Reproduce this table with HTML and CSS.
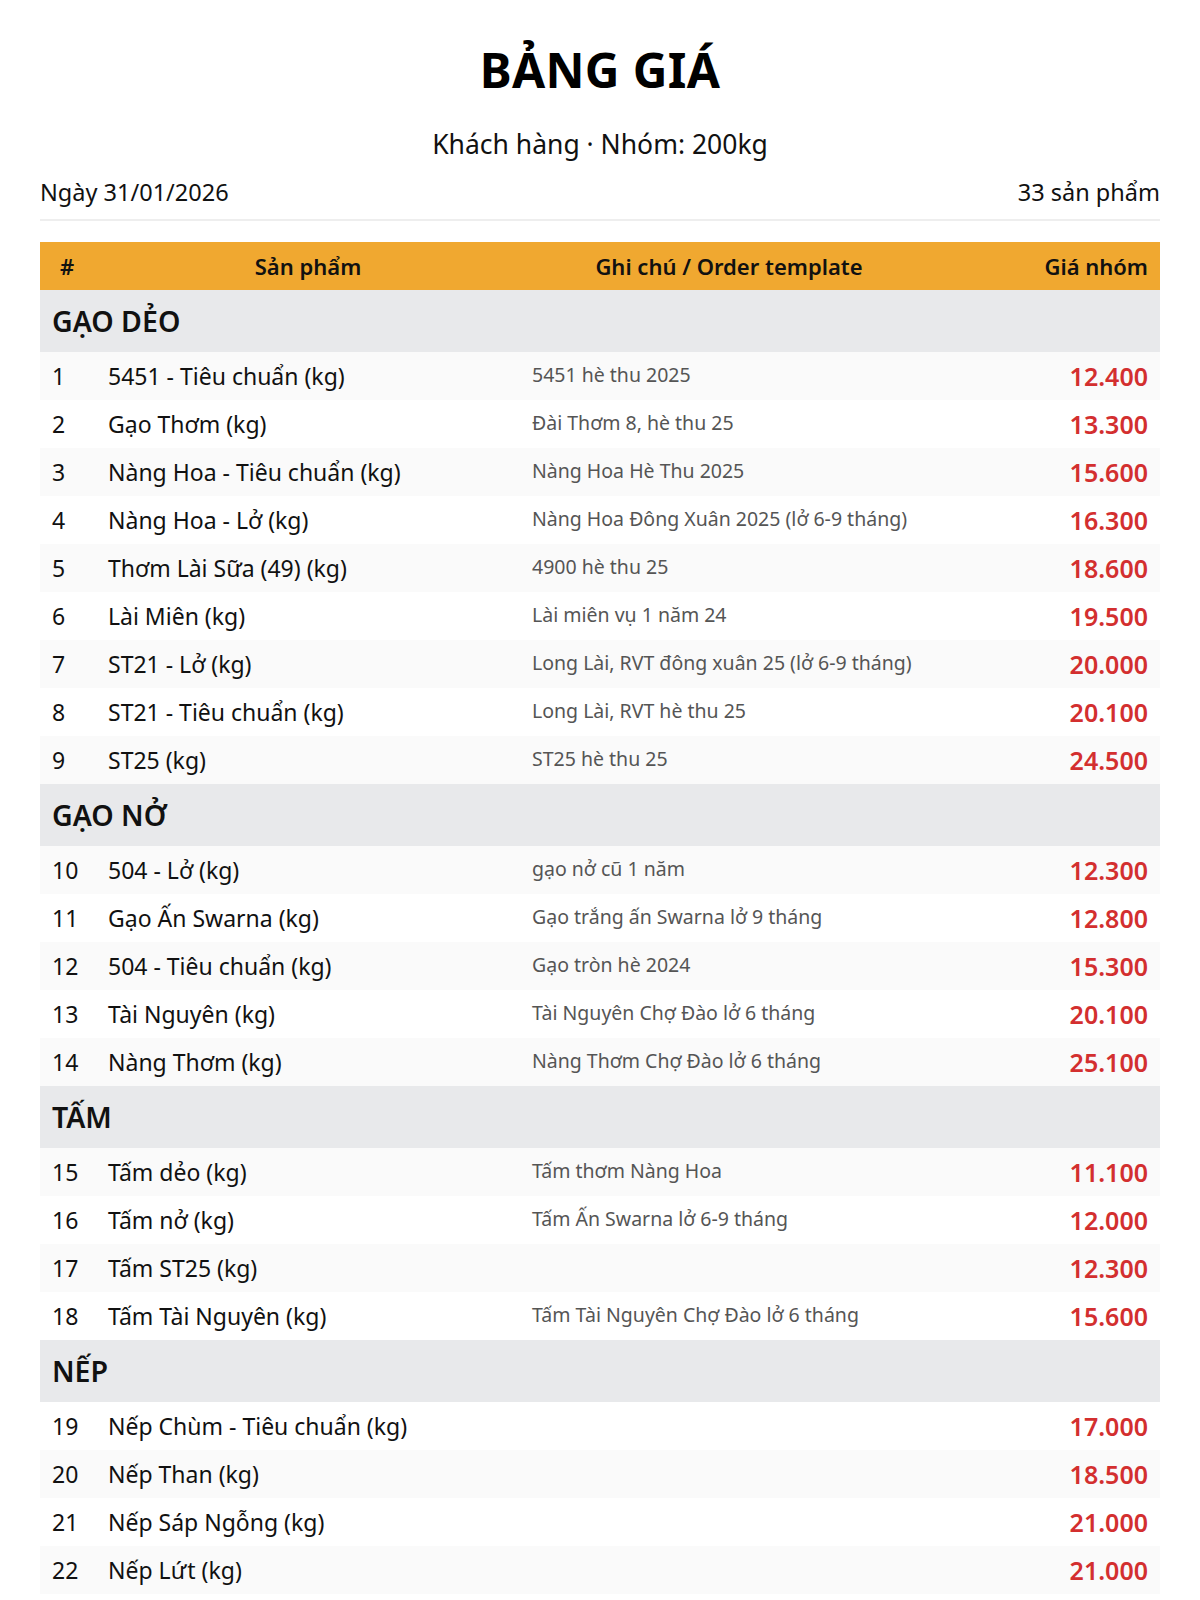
FILE: index.html
```html
<!DOCTYPE html>
<html lang="vi">
<head>
<meta charset="utf-8">
<title>Bảng giá</title>
<link rel="stylesheet" href="styles.css">
</head>
<body>
<div class="page">
  <h1 class="title">BẢNG GIÁ</h1>
  <div class="subtitle">Khách hàng · Nhóm: 200kg</div>
  <div class="meta">
    <span>Ngày 31/01/2026</span>
    <span>33 sản phẩm</span>
  </div>
  <table class="prices">
    <colgroup>
      <col class="c-num"><col class="c-name"><col class="c-note"><col class="c-price">
    </colgroup>
    <thead>
      <tr><th class="num">#</th><th>Sản phẩm</th><th>Ghi chú / Order template</th><th class="price">Giá nhóm</th></tr>
    </thead>
    <tbody>
      <tr class="cat"><td colspan="4">GẠO DẺO</td></tr>
      <tr><td class="num">1</td><td class="name">5451 - Tiêu chuẩn (kg)</td><td class="note">5451 hè thu 2025</td><td class="price">12.400</td></tr>
      <tr><td class="num">2</td><td class="name">Gạo Thơm (kg)</td><td class="note">Đài Thơm 8, hè thu 25</td><td class="price">13.300</td></tr>
      <tr><td class="num">3</td><td class="name">Nàng Hoa - Tiêu chuẩn (kg)</td><td class="note">Nàng Hoa Hè Thu 2025</td><td class="price">15.600</td></tr>
      <tr><td class="num">4</td><td class="name">Nàng Hoa - Lở (kg)</td><td class="note">Nàng Hoa Đông Xuân 2025 (lở 6-9 tháng)</td><td class="price">16.300</td></tr>
      <tr><td class="num">5</td><td class="name">Thơm Lài Sữa (49) (kg)</td><td class="note">4900 hè thu 25</td><td class="price">18.600</td></tr>
      <tr><td class="num">6</td><td class="name">Lài Miên (kg)</td><td class="note">Lài miên vụ 1 năm 24</td><td class="price">19.500</td></tr>
      <tr><td class="num">7</td><td class="name">ST21 - Lở (kg)</td><td class="note">Long Lài, RVT đông xuân 25 (lở 6-9 tháng)</td><td class="price">20.000</td></tr>
      <tr><td class="num">8</td><td class="name">ST21 - Tiêu chuẩn (kg)</td><td class="note">Long Lài, RVT hè thu 25</td><td class="price">20.100</td></tr>
      <tr><td class="num">9</td><td class="name">ST25 (kg)</td><td class="note">ST25 hè thu 25</td><td class="price">24.500</td></tr>
      <tr class="cat"><td colspan="4">GẠO NỞ</td></tr>
      <tr><td class="num">10</td><td class="name">504 - Lở (kg)</td><td class="note">gạo nở cũ 1 năm</td><td class="price">12.300</td></tr>
      <tr><td class="num">11</td><td class="name">Gạo Ấn Swarna (kg)</td><td class="note">Gạo trắng ấn Swarna lở 9 tháng</td><td class="price">12.800</td></tr>
      <tr><td class="num">12</td><td class="name">504 - Tiêu chuẩn (kg)</td><td class="note">Gạo tròn hè 2024</td><td class="price">15.300</td></tr>
      <tr><td class="num">13</td><td class="name">Tài Nguyên (kg)</td><td class="note">Tài Nguyên Chợ Đào lở 6 tháng</td><td class="price">20.100</td></tr>
      <tr><td class="num">14</td><td class="name">Nàng Thơm (kg)</td><td class="note">Nàng Thơm Chợ Đào lở 6 tháng</td><td class="price">25.100</td></tr>
      <tr class="cat"><td colspan="4">TẤM</td></tr>
      <tr><td class="num">15</td><td class="name">Tấm dẻo (kg)</td><td class="note">Tấm thơm Nàng Hoa</td><td class="price">11.100</td></tr>
      <tr><td class="num">16</td><td class="name">Tấm nở (kg)</td><td class="note">Tấm Ấn Swarna lở 6-9 tháng</td><td class="price">12.000</td></tr>
      <tr><td class="num">17</td><td class="name">Tấm ST25 (kg)</td><td class="note"></td><td class="price">12.300</td></tr>
      <tr><td class="num">18</td><td class="name">Tấm Tài Nguyên (kg)</td><td class="note">Tấm Tài Nguyên Chợ Đào lở 6 tháng</td><td class="price">15.600</td></tr>
      <tr class="cat"><td colspan="4">NẾP</td></tr>
      <tr><td class="num">19</td><td class="name">Nếp Chùm - Tiêu chuẩn (kg)</td><td class="note"></td><td class="price">17.000</td></tr>
      <tr><td class="num">20</td><td class="name">Nếp Than (kg)</td><td class="note"></td><td class="price">18.500</td></tr>
      <tr><td class="num">21</td><td class="name">Nếp Sáp Ngỗng (kg)</td><td class="note"></td><td class="price">21.000</td></tr>
      <tr><td class="num">22</td><td class="name">Nếp Lứt (kg)</td><td class="note"></td><td class="price">21.000</td></tr>
    </tbody>
  </table>
</div>
</body>
</html>
```

FILE: styles.css
```css
* { box-sizing: border-box; }
html, body { margin: 0; padding: 0; background: #fff; }
body {
  font-family: "Noto Sans", "Open Sans", sans-serif;
  color: #111;
}
.page {
  padding: 36px 40px 0;
}
.title {
  margin: 0;
  text-align: center;
  font-size: 48px;
  font-weight: 700;
  line-height: 68px;
  letter-spacing: 0.3px;
  color: #000;
}
.subtitle {
  margin-top: 22px;
  text-align: center;
  font-size: 26.5px;
  line-height: 36px;
}
.meta {
  display: flex;
  justify-content: space-between;
  margin-top: 15px;
  font-size: 23.5px;
  line-height: 30px;
  padding-bottom: 12px;
  border-bottom: 2px solid #eeeeee;
}
.prices {
  width: 100%;
  margin-top: 21px;
  border-collapse: collapse;
  table-layout: fixed;
}
.c-num { width: 56px; }
.c-name { width: 424px; }
.c-note { width: 418px; }
.c-price { width: 222px; }
.prices th {
  background: #f0a830;
  height: 48px;
  padding: 0 12px;
  font-size: 22px;
  font-weight: 600;
  text-align: center;
  color: #111;
}
.prices th.num { text-align: left; padding-left: 20px; }
.prices th.price { text-align: right; }
.prices td {
  height: 48px;
  padding: 0 12px;
  font-size: 23px;
  vertical-align: middle;
  white-space: nowrap;
}
.prices tbody tr:nth-child(odd) td { background: #fff; }
.prices tbody tr:nth-child(even) td { background: #fafafa; }
.prices tbody tr.cat td {
  height: 62px;
  background: #e8e9eb;
  font-size: 28.5px;
  font-weight: 600;
  color: #111;
}
.prices td.note {
  font-size: 19.5px;
  color: #555;
  padding-bottom: 4px;
}
.prices td.price {
  text-align: right;
  font-size: 25px;
  font-weight: 600;
  color: #d32f2f;
}
```
